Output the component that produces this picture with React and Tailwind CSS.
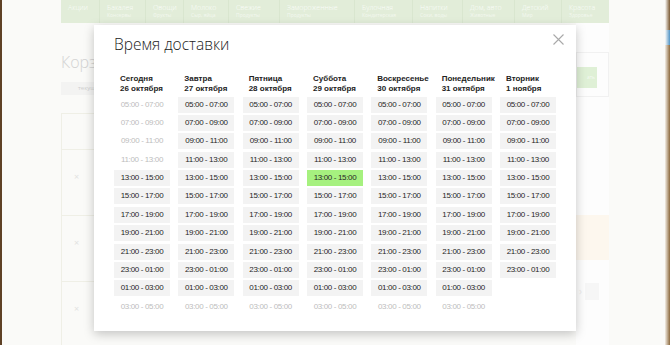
import { useState } from "react";

const TIMES = [
  "05:00 - 07:00",
  "07:00 - 09:00",
  "09:00 - 11:00",
  "11:00 - 13:00",
  "13:00 - 15:00",
  "15:00 - 17:00",
  "17:00 - 19:00",
  "19:00 - 21:00",
  "21:00 - 23:00",
  "23:00 - 01:00",
  "01:00 - 03:00",
  "03:00 - 05:00",
];

// off = rows that are unavailable, count = how many rows the day shows
const DAYS = [
  { name: "Сегодня", date: "26 октября", off: [0, 1, 2, 3, 11], count: 12 },
  { name: "Завтра", date: "27 октября", off: [11], count: 12 },
  { name: "Пятница", date: "28 октября", off: [11], count: 12 },
  { name: "Суббота", date: "29 октября", off: [11], count: 12 },
  { name: "Воскресенье", date: "30 октября", off: [11], count: 12 },
  { name: "Понедельник", date: "31 октября", off: [11], count: 12 },
  { name: "Вторник", date: "1 ноября", off: [], count: 10 },
];

const NAV = [
  { w: "w-[39px]", a: "Акции", b: "" },
  { w: "w-[46px]", a: "Бакалея", b: "Консервы" },
  { w: "w-[38px]", a: "Овощи", b: "Фрукты" },
  { w: "w-[45px]", a: "Молоко", b: "Сыр, яйца" },
  { w: "w-[51px]", a: "Свежие", b: "Продукты" },
  { w: "w-[75px]", a: "Замороженные", b: "Продукты" },
  { w: "w-[58px]", a: "Булочная", b: "Кондитерская" },
  { w: "w-[50px]", a: "Напитки", b: "Соки, воды" },
  { w: "w-[52px]", a: "Дом, авто", b: "Животные" },
  { w: "w-[47px]", a: "Детский", b: "Мир" },
  { w: "w-[47px]", a: "Красота", b: "Здоровье" },
];

const Slot = ({ time, off, active, onPick }) => {
  if (off) {
    return (
      <div className="h-[16px] flex items-center justify-center text-[8px] tracking-[-0.35px] text-[#bdbdbd]">
        {time}
      </div>
    );
  }
  return (
    <button
      onClick={onPick}
      className={`h-[16px] flex items-center justify-center text-[8px] tracking-[-0.35px] text-[#262626] ${
        active ? "bg-[#a6f17f]" : "bg-[#f3f3f3]"
      }`}
    >
      {time}
    </button>
  );
};

const DeliveryModal = () => {
  const [picked, setPicked] = useState("3-4");

  return (
    <div className="absolute left-[94px] top-[25px] w-[482px] h-[306px] bg-white shadow-[0_3px_10px_rgba(0,0,0,0.22)] px-[20px] pt-[8px]">
      <div className="flex justify-between items-start">
        <h2 className="text-[15.5px] leading-[20px] font-light text-[#222] font-['Open_Sans',sans-serif] mt-[0.5px]">
          Время доставки
        </h2>
        <svg width="11" height="11" viewBox="0 0 11 11" className="mt-[1px] -mr-[8px]">
          <path d="M0.5 0.5L10.5 10.5M10.5 0.5L0.5 10.5" stroke="#a9a9a9" strokeWidth="1.1" />
        </svg>
      </div>

      <div className="mt-[20.5px] grid grid-cols-[repeat(7,56px)] gap-x-[8.33px] font-['Liberation_Sans',Arial,sans-serif]">
        {DAYS.map((d, di) => (
          <div key={d.name} className="flex flex-col">
            <div className="pl-[6px] text-[8px] leading-[10px] font-bold text-[#222] mb-[2.5px]">
              <div>{d.name}</div>
              <div>{d.date}</div>
            </div>
            <div className="flex flex-col gap-[2.4px]">
              {TIMES.slice(0, d.count).map((t, ti) => (
                <Slot
                  key={t}
                  time={t}
                  off={d.off.includes(ti)}
                  active={picked === `${di}-${ti}`}
                  onPick={() => setPicked(`${di}-${ti}`)}
                />
              ))}
            </div>
          </div>
        ))}
      </div>
    </div>
  );
};

export default function App() {
  return (
    <div className="relative w-[670px] h-[345px] overflow-hidden flex font-['Open_Sans',sans-serif]">
      <div className="w-[2px] bg-[#5e4126]" />
      <div className="flex-1 bg-[#fafaf8] pl-[59px]">
        <div className="w-[548px]">
          {/* top menu */}
          <div className="h-[23px] bg-[#e2edd9] flex">
            {NAV.map((n, i) => (
              <div
                key={n.a}
                className={`${n.w} pl-[7px] pt-[3px] ${i < NAV.length - 1 ? "border-r border-[#d9e6cf]" : ""}`}
              >
                <div className="text-[7px] leading-[9px] font-light text-[#fbfdf9] whitespace-nowrap">{n.a}</div>
                <div className="text-[5px] leading-[7px] text-[#f3f8ef] whitespace-nowrap">{n.b}</div>
              </div>
            ))}
          </div>

          <div className="flex">
            {/* basket column */}
            <div className="w-[515px]">
              <div className="mt-[29px] text-[16px] leading-[20px] font-light text-[#d3d3d3]">Корзина</div>
              <div className="mt-[10px] h-[13px] w-[80px] bg-[#f3f3f2] pl-[17px] text-[6px] leading-[13px] text-[#cfcfcf]">
                текущий заказ
              </div>
              <div className="mt-[18px] border-l border-t border-[#efefe6] h-[300px]">
                <div className="h-[36px] border-b border-[#efefe6]" />
                {[0, 1, 2].map((r) => (
                  <div key={r} className="h-[66px] border-b border-[#efefe6] pl-[12px] pt-[21px] text-[9px] leading-[12px] text-[#e2e2e2]">
                    ×
                  </div>
                ))}
              </div>
            </div>

            {/* side column */}
            <div className="w-[33px] bg-[#fdfdfd]">
              <div className="mt-[29px] h-[45px] border border-[#f1f1f1] pt-[14px]">
                <div className="w-[20px] h-[21px] bg-[#dff0d6] text-[5px] leading-[21px] text-right pr-[2px] text-[#f4f9f1]">
                  ать
                </div>
              </div>
              <div className="mt-[118px] h-[45px] bg-[#fdf7ee]" />
              <div className="mt-[23px] flex items-center gap-[3px] pl-[3px]">
                <span className="text-[10px] leading-[17px] text-[#ececec]">›</span>
                <div className="w-[14px] h-[17px] bg-[#f6f6f6]" />
              </div>
            </div>
          </div>
        </div>
      </div>
      <div className="w-[5px] flex flex-col">
        <div className="h-[30px] bg-gradient-to-r from-[#fafaf8] to-[#7a5a34]" />
        <div className="h-[15px] bg-gradient-to-r from-[#fafaf8] to-[#4d93c4]" />
        <div className="flex-1 bg-gradient-to-r from-[#f3eee6] to-[#8c6a3e]" />
      </div>

      <DeliveryModal />
    </div>
  );
}
